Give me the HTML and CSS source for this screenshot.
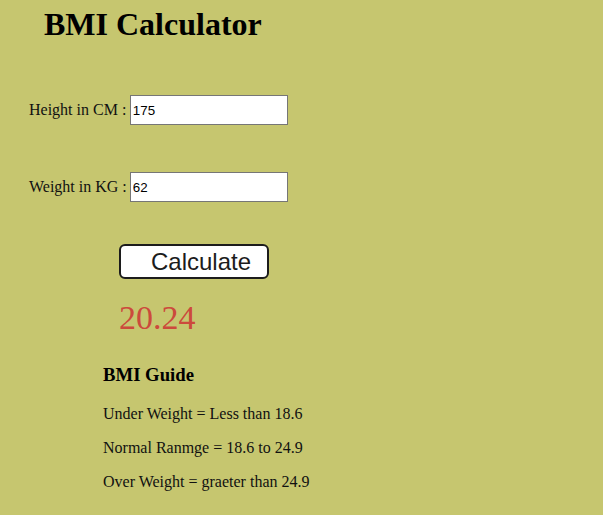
FILE: index.html
```html
<!DOCTYPE html>
<html lang="en">
<head>
<meta charset="utf-8">
<title>BMI Calculator</title>
<link rel="stylesheet" href="styles.css">
</head>
<body>
<main class="app">
  <h1 class="title">BMI Calculator</h1>
  <form class="form">
    <label class="field-label" for="height">Height in CM :</label>
    <input id="height" class="field" type="text" value="175">
    <label class="field-label" for="weight">Weight in KG :</label>
    <input id="weight" class="field" type="text" value="62">
  </form>
  <button class="calc" type="button">Calculate</button>
  <div class="result">20.24</div>
  <section class="guide">
    <h3 class="guide-title">BMI Guide</h3>
    <p class="guide-item">Under Weight = Less than 18.6</p>
    <p class="guide-item">Normal Ranmge = 18.6 to 24.9</p>
    <p class="guide-item">Over Weight = graeter than 24.9</p>
  </section>
</main>
</body>
</html>
```
FILE: styles.css
```css
body {
  margin: 0;
  background: #c6c66f;
  font-family: "Liberation Serif", "Times New Roman", serif;
  color: #000;
}

.app {
  display: flex;
  flex-direction: column;
  align-items: flex-start;
}

.title {
  margin: 6px 0 0 44px;
  font-size: 32px;
  font-weight: bold;
  line-height: normal;
}

.form {
  display: grid;
  grid-template-columns: auto 158px;
  column-gap: 3px;
  row-gap: 47px;
  align-items: center;
  margin: 52px 0 0 29px;
}

.field-label {
  font-size: 16px;
  color: #111;
}

.field {
  box-sizing: border-box;
  width: 158px;
  height: 30px;
  margin: 0;
  padding: 1px 2px;
  border: 1px solid #767676;
  background: #fff;
  font: 13.33px "Liberation Sans", Arial, sans-serif;
  color: #000;
}

.calc {
  box-sizing: border-box;
  width: 150px;
  height: 35px;
  margin: 42px 0 0 119px;
  padding: 0 0 0 30px;
  text-align: left;
  border: 2px solid #1c1c1c;
  border-radius: 6px;
  background: #fff;
  font: 24px "Liberation Sans", Arial, sans-serif;
  color: #1c1c1c;
}

.result {
  margin: 20px 0 0 119px;
  font-size: 34px;
  line-height: normal;
  color: #cc4a3c;
}

.guide {
  margin: 27px 0 0 103px;
}

.guide-title {
  margin: 0 0 19px;
  font-size: 18.72px;
  font-weight: bold;
}

.guide-item {
  margin: 0 0 16px;
  font-size: 16px;
  color: #111;
}
```
